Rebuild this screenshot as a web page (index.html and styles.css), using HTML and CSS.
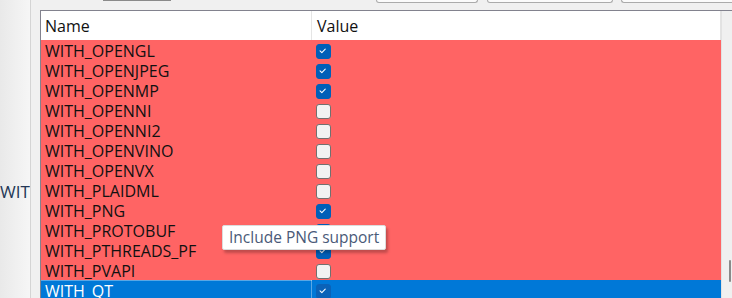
FILE: index.html
```html
<!DOCTYPE html>
<html lang="en">
<head>
    <meta charset="UTF-8">
    <title>CMake Options</title>
    <link rel="stylesheet" href="styles.css">
</head>
<body>
    <div class="side">
        <span class="side-label">WITH_QT</span>
    </div>
    <div class="main">
        <div class="topbar">
            <div class="tab"></div>
            <div class="btn btn-a"></div>
            <div class="btn btn-b"></div>
            <div class="btn btn-c"></div>
        </div>
        <div class="frame">
            <div class="grid">
                <div class="head">
                    <div class="cell name">Name</div>
                    <div class="cell value">Value</div>
                </div>
                <div class="row red"><div class="cell name">WITH_OPENGL</div><div class="cell value"><span class="box on"><svg viewBox="0 0 15 15"><polyline points="4.5,7.8 6.6,9.8 10.5,5.8"/></svg></span></div></div>
                <div class="row red"><div class="cell name">WITH_OPENJPEG</div><div class="cell value"><span class="box on"><svg viewBox="0 0 15 15"><polyline points="4.5,7.8 6.6,9.8 10.5,5.8"/></svg></span></div></div>
                <div class="row red"><div class="cell name">WITH_OPENMP</div><div class="cell value"><span class="box on"><svg viewBox="0 0 15 15"><polyline points="4.5,7.8 6.6,9.8 10.5,5.8"/></svg></span></div></div>
                <div class="row red"><div class="cell name">WITH_OPENNI</div><div class="cell value"><span class="box"></span></div></div>
                <div class="row red"><div class="cell name">WITH_OPENNI2</div><div class="cell value"><span class="box"></span></div></div>
                <div class="row red"><div class="cell name">WITH_OPENVINO</div><div class="cell value"><span class="box"></span></div></div>
                <div class="row red"><div class="cell name">WITH_OPENVX</div><div class="cell value"><span class="box"></span></div></div>
                <div class="row red"><div class="cell name">WITH_PLAIDML</div><div class="cell value"><span class="box"></span></div></div>
                <div class="row red"><div class="cell name">WITH_PNG</div><div class="cell value"><span class="box on"><svg viewBox="0 0 15 15"><polyline points="4.5,7.8 6.6,9.8 10.5,5.8"/></svg></span></div></div>
                <div class="row red"><div class="cell name">WITH_PROTOBUF</div><div class="cell value"><span class="box on"><svg viewBox="0 0 15 15"><polyline points="4.5,7.8 6.6,9.8 10.5,5.8"/></svg></span></div></div>
                <div class="row red"><div class="cell name">WITH_PTHREADS_PF</div><div class="cell value"><span class="box on"><svg viewBox="0 0 15 15"><polyline points="4.5,7.8 6.6,9.8 10.5,5.8"/></svg></span></div></div>
                <div class="row red"><div class="cell name">WITH_PVAPI</div><div class="cell value"><span class="box"></span></div></div>
                <div class="row selected"><div class="cell name focus">WITH_QT</div><div class="cell value"><span class="box on"><svg viewBox="0 0 15 15"><polyline points="4.5,7.8 6.6,9.8 10.5,5.8"/></svg></span></div></div>
            </div>
            <div class="scrollbar">
                <div class="thumb"></div>
            </div>
        </div>
    </div>

    <div class="tooltip">Include PNG support</div>
</body>
</html>
```

FILE: styles.css
```css
body {
    font-family: "Open Sans", "Noto Sans", sans-serif;
    font-size: 16px;
    background-color: #f0f0f0;
    margin: 0;
    padding: 0;
    width: 732px;
    height: 298px;
    overflow: hidden;
    display: flex;
}
.side {
    width: 30px;
    height: 298px;
    flex: none;
    background: linear-gradient(to right, #e9e9e9, #f6f6f6);
    border-right: 1px solid #d4d4d4;
    overflow: hidden;
}
.side-label {
    display: block;
    margin-top: 180px;
    font-size: 17px;
    color: #233756;
    white-space: nowrap;
}
.main {
    flex: 1;
    display: flex;
    flex-direction: column;
    padding-left: 9px;
    min-height: 0;
}
.topbar {
    height: 10px;
    flex: none;
    display: flex;
    align-items: flex-start;
}
.tab {
    width: 68px;
    height: 1px;
    margin-left: 63px;
    background-color: #8a8a8a;
}
.btn {
    height: 2px;
    background-color: #fbfbfb;
    border: 1px solid #ababab;
    border-top: none;
    border-radius: 0 0 4px 4px;
}
.btn-a {
    width: 100px;
    margin-left: 205px;
}
.btn-b {
    width: 124px;
    margin-left: 9px;
}
.btn-c {
    flex: 1;
    margin-left: 8px;
    border-right: none;
    border-radius: 0 0 0 4px;
}
.frame {
    flex: 1;
    min-height: 0;
    display: flex;
    border-top: 1px solid #82828e;
    border-left: 1px solid #82828e;
}
.grid {
    width: 680px;
    display: flex;
    flex-direction: column;
}
.head, .row {
    flex: none;
    display: grid;
    grid-template-columns: 271px 1fr;
}
.head {
    height: 29px;
    background-color: #fff;
    border-right: 1px solid #e3e3e3;
    color: #111;
}
.head .name {
    border-right: 1px solid #e5e5e5;
}
.cell {
    display: flex;
    align-items: center;
    white-space: nowrap;
}
.name {
    padding-left: 4px;
}
.value {
    padding-left: 4px;
}
.head .value {
    padding-left: 5px;
}
.row {
    height: 20px;
    color: #111;
}
.red {
    background-color: #ff6464;
}
.selected {
    background-color: #0078d7;
    color: #fff;
}
.focus {
    box-shadow: inset 0 1px 0 0 rgba(255, 255, 255, 0.35), inset -1px 0 0 0 rgba(255, 255, 255, 0.35);
}
.box {
    width: 13px;
    height: 13px;
    border: 1px solid #707070;
    border-radius: 3px;
    background-color: #f2f2f2;
}
.box.on {
    background-color: #005fb8;
    border-color: #005fb8;
}
.selected .box.on {
    background-color: #0a62b8;
    border-color: #0a62b8;
}
.box svg {
    display: block;
    width: 13px;
    height: 13px;
}
.box polyline {
    fill: none;
    stroke: #fff;
    stroke-width: 1.2;
    stroke-linecap: round;
    stroke-linejoin: round;
    transform: translate(-1px, -1px);
}
.scrollbar {
    flex: 1;
    border-left: 1px solid #e2e2e2;
    background-color: #f0f0f0;
    position: relative;
}
.thumb {
    position: absolute;
    right: 1px;
    top: 249px;
    width: 2px;
    height: 22px;
    background-color: #8a8a8a;
    border-radius: 1px;
}
.tooltip {
    position: absolute;
    left: 222px;
    top: 225px;
    padding: 0 6px;
    height: 23px;
    line-height: 23px;
    background-color: #fff;
    border: 1px solid #dcdcdc;
    border-radius: 2px;
    box-shadow: 2px 3px 3px rgba(0, 0, 0, 0.25);
    color: #4a5a78;
    font-size: 15.5px;
    white-space: nowrap;
}
```
